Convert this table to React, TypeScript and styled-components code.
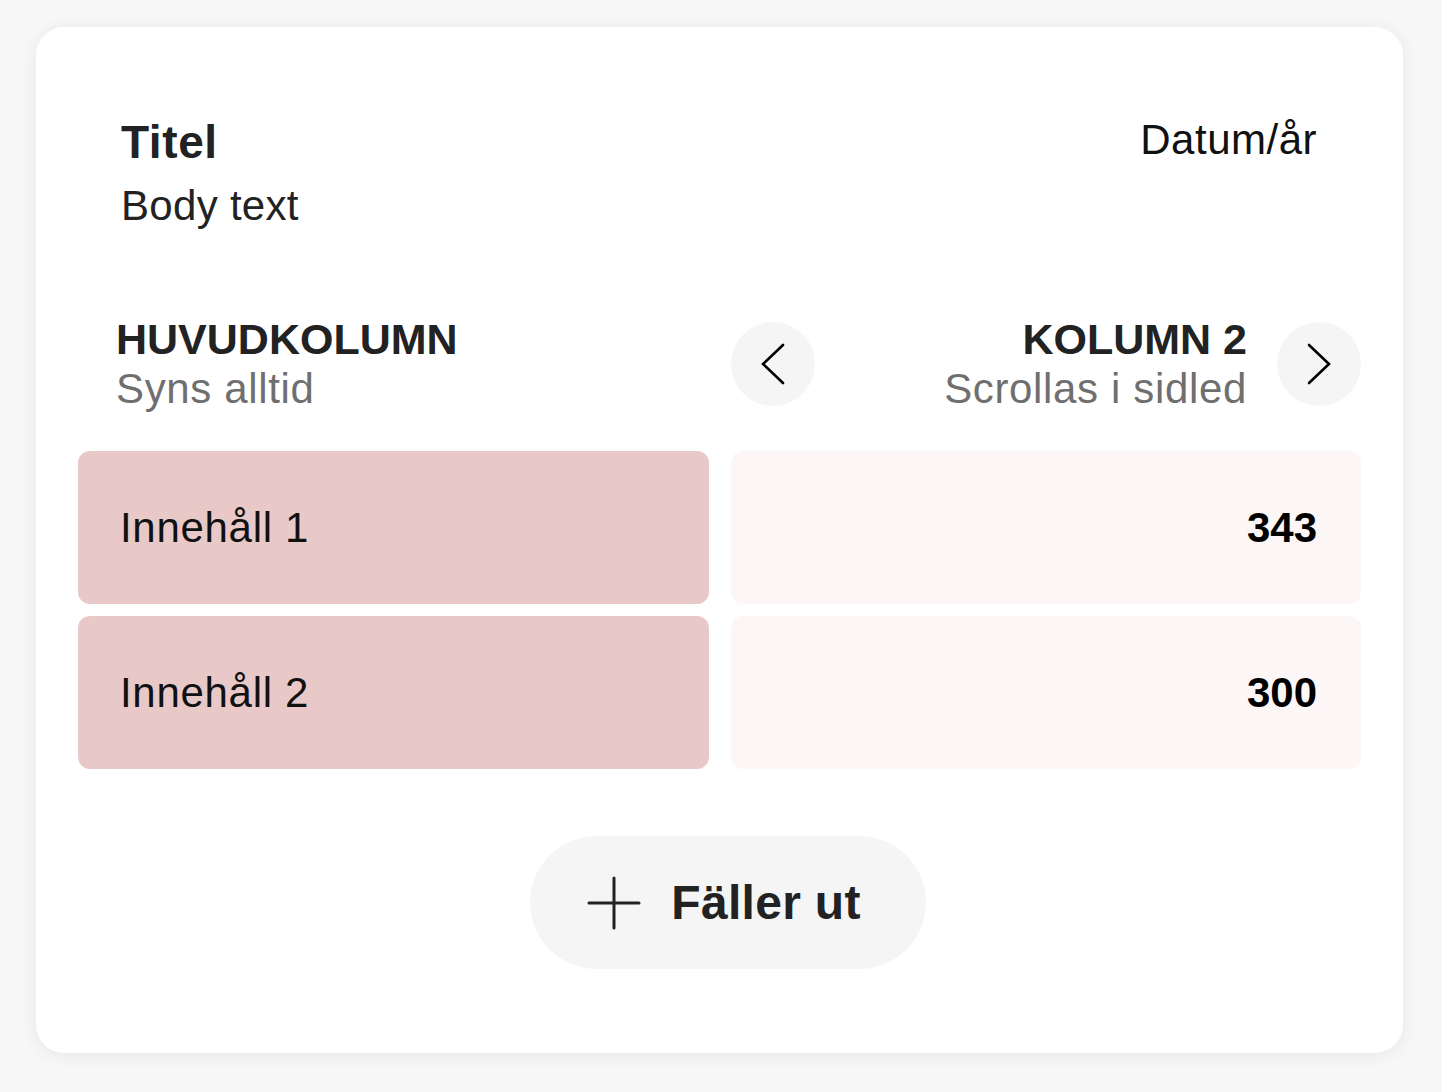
import { FC } from "react";
import styled, { createGlobalStyle } from "styled-components";

const GlobalStyle = createGlobalStyle`
  html, body {
    margin: 0;
    padding: 0;
    background: #f7f7f7;
  }
  body {
    font-family: "Liberation Sans", Arial, sans-serif;
    color: #222222;
  }
`;

const Page = styled.div`
  padding: 27px 39px 39px 36px;
`;

const Card = styled.section`
  background: #ffffff;
  border-radius: 28px;
  box-shadow: 0 2px 18px rgba(0, 0, 0, 0.07);
  padding: 88px 42px 84px;
`;

const CardHeader = styled.header`
  display: flex;
  justify-content: space-between;
  align-items: flex-start;
  padding: 0 44px 0 43px;
`;

const TitleBlock = styled.div`
  display: flex;
  flex-direction: column;
  gap: 12px;
`;

const Title = styled.h1`
  margin: 0;
  font-size: 46px;
  line-height: 54px;
  font-weight: 700;
  letter-spacing: 0.6px;
  color: #222222;
`;

const BodyText = styled.p`
  margin: 0;
  font-size: 42px;
  line-height: 50px;
  letter-spacing: 0.3px;
  color: #222222;
`;

const DateText = styled.span`
  font-size: 42px;
  line-height: 50px;
  letter-spacing: 0.5px;
  color: #111111;
`;

const Grid = styled.div`
  display: grid;
  grid-template-columns: 631px 630px;
  column-gap: 22px;
  margin-top: 83px;
`;

const ColumnHead = styled.div<{ $align?: "left" | "right" }>`
  display: flex;
  flex-direction: column;
  align-items: ${(p) => (p.$align === "right" ? "flex-end" : "flex-start")};
  text-align: ${(p) => p.$align || "left"};
`;

const MainHead = styled(ColumnHead)`
  padding-left: 38px;
`;

const ScrollHead = styled.div`
  display: flex;
  align-items: center;
`;

const ScrollLabel = styled(ColumnHead)`
  flex: 1;
  padding-right: 30px;
`;

const HeadLabel = styled.span`
  font-size: 43px;
  line-height: 50px;
  font-weight: 700;
  color: #222222;
`;

const HeadSub = styled.span`
  font-size: 42px;
  line-height: 50px;
  letter-spacing: 0.65px;
  color: #6f6f6f;
`;

const NavButton = styled.button`
  width: 84px;
  height: 84px;
  flex: 0 0 84px;
  border: none;
  border-radius: 50%;
  background: #f5f5f5;
  padding: 0;
  display: flex;
  align-items: center;
  justify-content: center;
  cursor: pointer;
`;

const Rows = styled.div`
  grid-column: 1 / span 2;
  display: grid;
  grid-template-columns: 631px 630px;
  column-gap: 22px;
  row-gap: 12px;
  margin-top: 37px;
`;

const Cell = styled.div<{ $variant: "main" | "scroll" }>`
  height: 153px;
  border-radius: 12px;
  display: flex;
  align-items: center;
  box-sizing: border-box;
  font-size: 42px;
  background: ${(p) => (p.$variant === "main" ? "#e8c9c8" : "#fcf7f6")};
  justify-content: ${(p) => (p.$variant === "main" ? "flex-start" : "flex-end")};
  padding: ${(p) => (p.$variant === "main" ? "0 0 0 42px" : "0 44px 0 0")};
  font-weight: ${(p) => (p.$variant === "main" ? 400 : 700)};
  letter-spacing: ${(p) => (p.$variant === "main" ? "0.7px" : "0")};
  color: ${(p) => (p.$variant === "main" ? "#111111" : "#000000")};
`;

const Footer = styled.div`
  display: flex;
  justify-content: center;
  margin-top: 67px;
  padding-left: 17px;
`;

const ExpandButton = styled.button`
  height: 133px;
  border: none;
  border-radius: 67px;
  background: #f5f5f5;
  display: flex;
  align-items: center;
  gap: 30px;
  padding: 0 65px 0 57px;
  font-family: "Liberation Sans", Arial, sans-serif;
  font-size: 48px;
  font-weight: 700;
  letter-spacing: 0.3px;
  color: #222222;
  cursor: pointer;
`;

const Chevron: FC<{ dir: "left" | "right" }> = ({ dir }) => (
  <svg width="84" height="84" viewBox="0 0 84 84" fill="none">
    <polyline
      points={dir === "left" ? "52,23 32,42 52,61" : "32,23 52,42 32,61"}
      stroke="#000000"
      strokeWidth="2.6"
      strokeLinecap="round"
      strokeLinejoin="miter"
    />
  </svg>
);

const PlusIcon = () => (
  <svg width="54" height="54" viewBox="0 0 54 54" fill="none">
    <path
      d="M27 2V52M2 27H52"
      stroke="#222222"
      strokeWidth="3"
      strokeLinecap="round"
    />
  </svg>
);

const rows = [
  { label: "Innehåll 1", value: "343" },
  { label: "Innehåll 2", value: "300" },
];

const App = () => {
  return (
    <>
      <GlobalStyle />
      <Page>
        <Card>
          <CardHeader>
            <TitleBlock>
              <Title>Titel</Title>
              <BodyText>Body text</BodyText>
            </TitleBlock>
            <DateText>Datum/år</DateText>
          </CardHeader>

          <Grid>
            <MainHead>
              <HeadLabel>HUVUDKOLUMN</HeadLabel>
              <HeadSub>Syns alltid</HeadSub>
            </MainHead>
            <ScrollHead>
              <NavButton aria-label="Föregående">
                <Chevron dir="left" />
              </NavButton>
              <ScrollLabel $align="right">
                <HeadLabel>KOLUMN 2</HeadLabel>
                <HeadSub>Scrollas i sidled</HeadSub>
              </ScrollLabel>
              <NavButton aria-label="Nästa">
                <Chevron dir="right" />
              </NavButton>
            </ScrollHead>

            <Rows>
              {rows.map((r) => [
                <Cell key={r.label} $variant="main">
                  {r.label}
                </Cell>,
                <Cell key={r.label + "-v"} $variant="scroll">
                  {r.value}
                </Cell>,
              ])}
            </Rows>
          </Grid>

          <Footer>
            <ExpandButton>
              <PlusIcon />
              Fäller ut
            </ExpandButton>
          </Footer>
        </Card>
      </Page>
    </>
  );
};

export default App;
